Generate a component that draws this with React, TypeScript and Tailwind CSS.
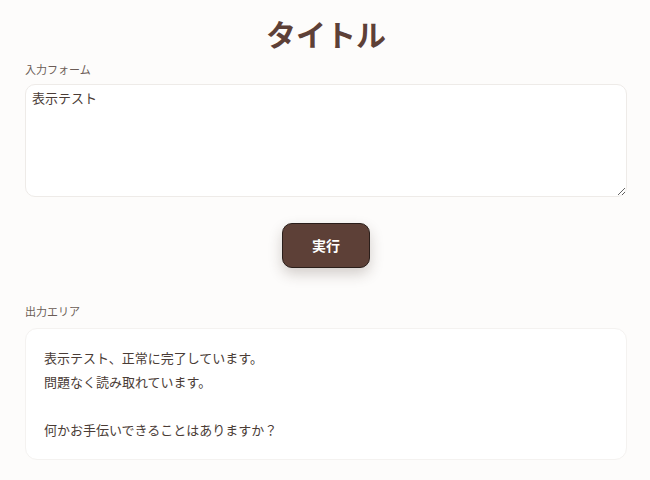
import React from "react";

export default function App() {
  return (
    <div
      className="min-h-[480px] w-full bg-[#fdfcfb] pt-[15px] pl-[25px] pr-[23px] text-[#4e3f39]"
      style={{ fontFamily: '"Noto Sans CJK JP", "Noto Sans", sans-serif' }}
    >
      <h1 className="text-center text-[30px] font-bold leading-[36px] text-[#5d4037]">タイトル</h1>
      <div className="mt-[10px] text-[11px] leading-[16px] text-[#6b5c56]">入力フォーム</div>
      <textarea
        className="mt-[7px] block h-[113px] w-full resize-y rounded-[10px] border border-[#eeebe8] bg-white px-[6px] py-[2px] text-[13px] leading-[22px] text-[#4a3c36] outline-none"
        defaultValue="表示テスト"
      />
      <div className="mt-[26px] flex justify-center">
        <button className="h-[45px] w-[88px] rounded-[10px] border-[1.5px] border-[#2a1e1a] bg-[#5d4037] text-[14px] font-bold text-white shadow-[0_6px_14px_rgba(60,40,30,0.22)]">
          実行
        </button>
      </div>
      <div className="mt-[35px] text-[11px] leading-[16px] text-[#6b5c56]">出力エリア</div>
      <div className="mt-[9px] rounded-[12px] border border-[#f4f2f0] bg-white px-[18px] py-[17px] text-[13px] leading-[24px] text-[#4a3c36]">
        <div>表示テスト、正常に完了しています。</div>
        <div>問題なく読み取れています。</div>
        <div className="h-[24px]"></div>
        <div>何かお手伝いできることはありますか？</div>
      </div>
    </div>
  );
}
